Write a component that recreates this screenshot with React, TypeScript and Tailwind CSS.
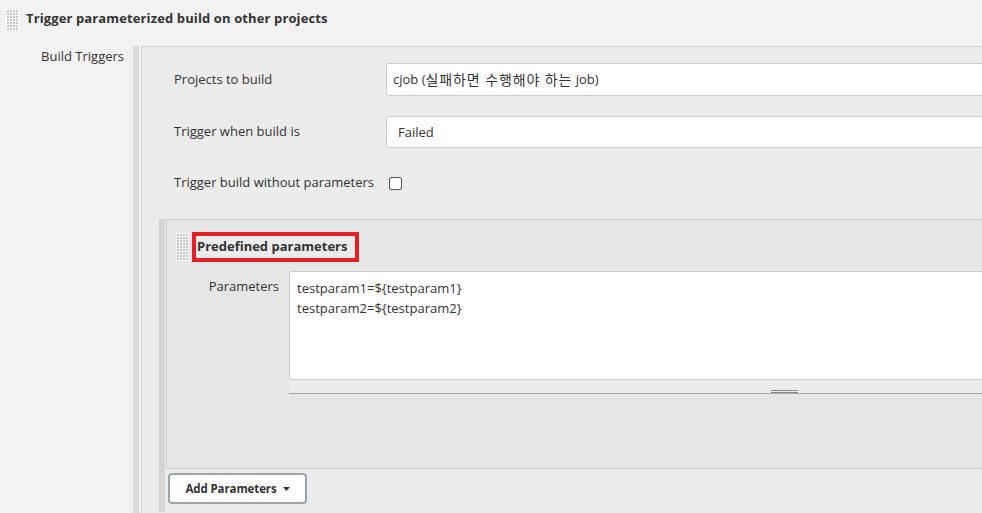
import React from 'react';

const Grip: React.FC<{ w: number; h: number }> = ({ w, h }) => {
  const dots: React.ReactElement[] = [];
  for (let y = 1; y < h - 1; y += 3) {
    for (let x = 1; x < w - 1; x += 3) {
      dots.push(<rect key={`${x}-${y}`} x={x} y={y} width={2} height={2} fill="#c4c4c4" />);
    }
  }
  return (
    <svg width={w} height={h} className="shrink-0 bg-white">
      {dots}
    </svg>
  );
};

const App: React.FC = () => {
  return (
    <div className="w-[982px] h-[513px] overflow-hidden bg-[#f2f2f2] text-[13px] text-[#333] font-['Open_Sans','Noto_Sans_CJK_KR',sans-serif]">
      <div className="w-[1040px]">
        {/* section header */}
        <div className="flex items-center h-[46px] pl-[6px] pb-[8px]">
          <Grip w={13} h={21} />
          <span className="ml-[7px] font-bold tracking-[0.12px]">Trigger parameterized build on other projects</span>
        </div>

        <div className="flex">
          <div className="w-[134px] shrink-0 text-right pr-[10px] pt-[1px] leading-[18px]">Build Triggers</div>
          <div className="flex-1 border-l-[6px] border-[#dcdcdc] pl-[2px] min-h-[480px] -ml-[1px]">
            <div className="h-full border-l border-t border-[#d4d4d4] bg-[#ececec] pt-[16px]">
              <div className="flex items-center h-[33px]">
                <div className="w-[244px] shrink-0 pl-[32px]">Projects to build</div>
                <div className="flex-1 h-full bg-white border border-[#cccccc] rounded-[3px] flex items-center pl-[6px]">
                  <span>cjob (</span>
                  <span className="text-[14px] tracking-[0.9px]">실패하면 수행해야 하는</span>
                  <span>&nbsp;job)</span>
                </div>
              </div>

              <div className="flex items-center h-[32px] mt-[20px]">
                <div className="w-[244px] shrink-0 pl-[32px]">Trigger when build is</div>
                <div className="flex-1 h-full bg-white border border-[#cccccc] rounded-[3px] flex items-center pl-[11px] pt-[2px]">
                  Failed
                </div>
              </div>

              <div className="flex items-center h-[30px] mt-[20px] pl-[32px]">
                <span>Trigger build without parameters</span>
                <span className="ml-[15px] w-[13px] h-[13px] bg-white border border-[#555] rounded-[2px]" />
              </div>

              {/* nested section */}
              <div className="ml-[17px] mt-[21px] border-l-[6px] border-[#d5d5d5] pl-[1px] pb-[8px]">
                <div className="bg-[#e6e6e6] border-l border-t border-b border-[#cfcfcf] h-[250px] pt-[12px]">
                  <div className="flex items-center pl-[9px] h-[30px]">
                    <Grip w={13} h={28} />
                    <div className="ml-[3px] border-[4px] border-[#e41f26] bg-[#ececec] h-[30px] flex items-center pl-[1px] pr-[8px] font-bold">
                      Predefined parameters
                    </div>
                  </div>

                  <div className="flex mt-[9px]">
                    <div className="w-[122px] shrink-0 text-right pr-[10px] pt-[6px]">Parameters</div>
                    <div className="flex-1">
                      <div className="h-[109px] bg-white border border-[#cccccc] rounded-tl-[3px] px-[7px] pt-[6px] leading-[20px]">
                        <div>testparam1=${'{'}testparam1{'}'}</div>
                        <div>testparam2=${'{'}testparam2{'}'}</div>
                      </div>
                      <div className="h-[14px] bg-[#ececec] border-b border-[#9eabb6] relative">
                        <div className="absolute left-[482px] top-[10px] w-[27px] h-[3px] border-t border-b border-[#8a8a8a]" />
                      </div>
                    </div>
                  </div>
                </div>

                <button className="mt-[4px] ml-[2px] w-[139px] h-[31px] bg-white border-2 border-[#9aa5b0] rounded-[4px] flex items-center justify-center gap-[6px] font-bold text-[11.5px] text-[#333] tracking-[-0.1px]">
                  <span>Add Parameters</span>
                  <svg width="7" height="4" viewBox="0 0 7 4">
                    <path d="M0 0 L7 0 L3.5 4 Z" fill="#333" />
                  </svg>
                </button>
              </div>
            </div>
          </div>
        </div>
      </div>
    </div>
  );
};

export default App;
